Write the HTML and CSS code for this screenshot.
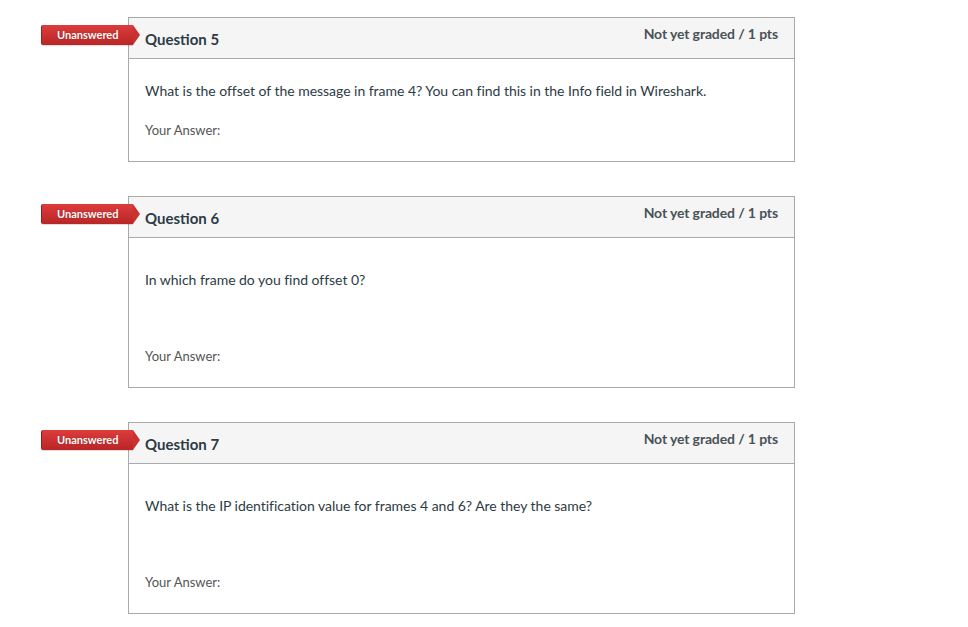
FILE: index.html
```html
<!DOCTYPE html>
<html lang="en">
<head>
<meta charset="utf-8">
<title>Quiz</title>
<link rel="stylesheet" href="styles.css">
</head>
<body>
<main class="quiz">
  <section class="question">
    <div class="badge">Unanswered</div>
    <header class="q-header">
      <h2 class="q-name">Question 5</h2>
      <span class="q-points">Not yet graded / 1 pts</span>
    </header>
    <div class="q-body">
      <p class="q-text">What is the offset of the message in frame 4? You can find this in the Info field in Wireshark.</p>
      <div class="q-answer">Your Answer:</div>
    </div>
  </section>

  <section class="question">
    <div class="badge">Unanswered</div>
    <header class="q-header">
      <h2 class="q-name">Question 6</h2>
      <span class="q-points">Not yet graded / 1 pts</span>
    </header>
    <div class="q-body q-body-tall">
      <p class="q-text">In which frame do you find offset 0?</p>
      <div class="q-answer">Your Answer:</div>
    </div>
  </section>

  <section class="question">
    <div class="badge">Unanswered</div>
    <header class="q-header">
      <h2 class="q-name">Question 7</h2>
      <span class="q-points">Not yet graded / 1 pts</span>
    </header>
    <div class="q-body q-body-tall">
      <p class="q-text">What is the IP identification value for frames 4 and 6? Are they the same?</p>
      <div class="q-answer">Your Answer:</div>
    </div>
  </section>
</main>
</body>
</html>
```

FILE: styles.css
```css
html, body {
  margin: 0;
  padding: 0;
  background: #ffffff;
}

body {
  font-family: Lato, "Open Sans", "Liberation Sans", sans-serif;
  color: #2d3b45;
}

.quiz {
  display: flex;
  flex-direction: column;
  gap: 34px;
  width: 667px;
  padding: 17px 0 0 128px;
}

.question {
  position: relative;
  border: 1px solid #aaaaaa;
  background: #ffffff;
}

.badge {
  position: absolute;
  left: -88px;
  top: 7px;
  width: 92px;
  height: 20px;
  box-sizing: border-box;
  padding-left: 15px;
  background: linear-gradient(#dd3c3c, #b92626);
  border-left: 1px solid #9c1d1d;
  border-radius: 2px 0 0 2px;
  color: #ffffff;
  font-size: 11px;
  font-weight: 700;
  line-height: 20px;
  text-shadow: 0 0 1px rgba(90, 0, 0, 0.5);
  box-shadow: 0 1px 1px rgba(0, 0, 0, 0.15);
  z-index: 2;
}

.badge::after {
  content: "";
  position: absolute;
  right: -7px;
  top: 0;
  width: 0;
  height: 0;
  border-top: 10px solid transparent;
  border-bottom: 10px solid transparent;
  border-left: 7px solid #ca3131;
}

.q-header {
  display: flex;
  justify-content: space-between;
  align-items: flex-start;
  height: 41px;
  box-sizing: border-box;
  padding: 0 16px 0 16px;
  background: #f5f5f5;
  border-bottom: 1px solid #aaaaaa;
}

.q-name {
  margin: 0;
  padding-top: 11px;
  font-size: 15px;
  font-weight: 700;
  line-height: 20px;
  color: #2d3b45;
}

.q-points {
  padding-top: 6px;
  font-size: 14px;
  font-weight: 700;
  letter-spacing: -0.12px;
  line-height: 20px;
  color: #4a5257;
}

.q-body {
  padding: 22px 16px 22px;
}

.q-text {
  margin: 0 0 20px;
  font-size: 14px;
  letter-spacing: -0.03px;
  line-height: 20px;
  color: #2d3b45;
}

.q-answer {
  font-size: 13px;
  line-height: 18px;
  color: #555555;
}

.q-body-tall {
  padding-top: 32px;
}

.q-body-tall .q-text {
  margin-bottom: 57px;
}
```
